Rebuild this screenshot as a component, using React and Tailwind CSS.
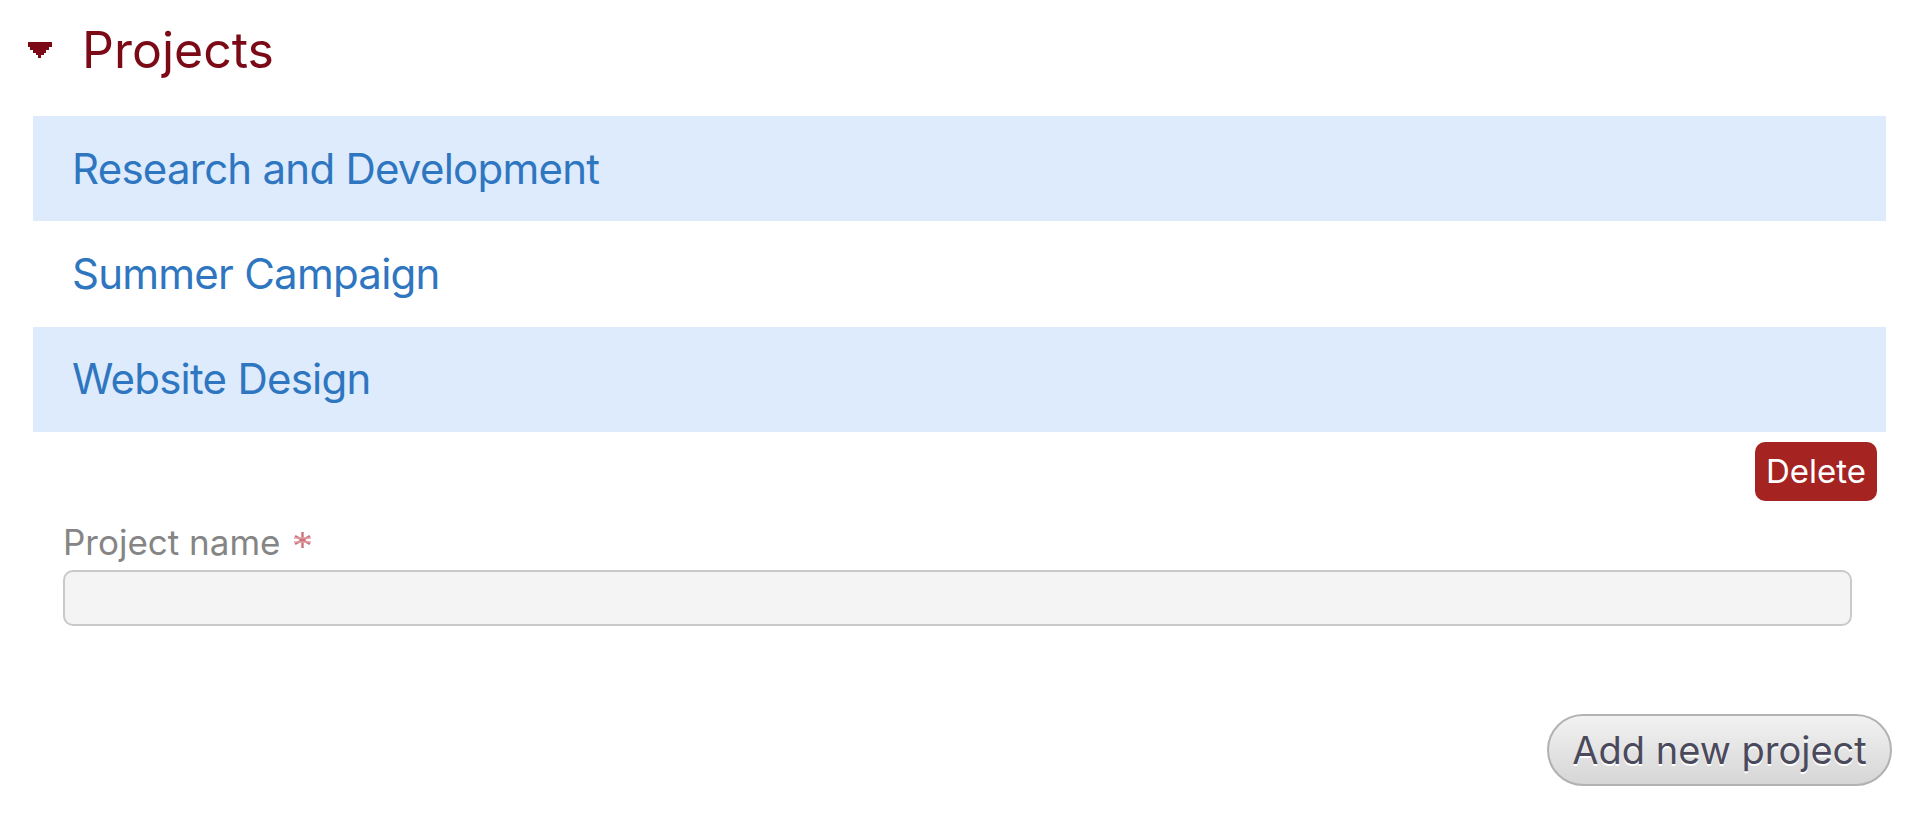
const projects = [
  { name: 'Research and Development', striped: true },
  { name: 'Summer Campaign', striped: false },
  { name: 'Website Design', striped: true },
];

const font = { fontFamily: 'Inter, "Noto Sans", sans-serif' };

const Caret = () => (
  <svg width="27" height="16" viewBox="0 0 9 6" shapeRendering="crispEdges" className="shrink-0">
    <path d="M0 0h9v2H8v1H7v1H6v1H5v1H4V5H3V4H2V3H1V2H0z" fill="#7b0a16" />
  </svg>
);

const Required = () => (
  <svg width="19" height="16" viewBox="0 0 19 16" className="ml-[12px] mb-[14px] self-end">
    <g stroke="#c0505a" strokeWidth="2.4" opacity="0.8">
      <line x1="9.5" y1="0" x2="9.5" y2="16" />
      <line x1="2" y1="4" x2="17" y2="12" />
      <line x1="2" y1="12" x2="17" y2="4" />
      <line x1="1" y1="6" x2="18" y2="6" stroke="#d88a90" strokeWidth="1.4" />
      <line x1="1" y1="10" x2="18" y2="10" stroke="#d88a90" strokeWidth="1.4" />
    </g>
  </svg>
);

export default function App() {
  return (
    <div className="w-full min-h-[817px] bg-white" style={font}>
      {/* Section header */}
      <div className="flex items-center pl-[26px] pt-[20px] mb-[36px] h-[80px]">
        <Caret />
        <h2 className="ml-[29px] text-[50px] leading-[60px] text-[#7b0a16]">Projects</h2>
      </div>

      {/* Project list */}
      <div className="ml-[33px] mr-[34px]">
        {projects.map((p) => (
          <div
            key={p.name}
            className={`flex items-center h-[105.4px] pl-[39px] ${p.striped ? 'bg-[#ddebfd]' : 'bg-white'}`}
          >
            <span className="text-[42px] leading-none tracking-[-0.018em] text-[#2f76c1]">{p.name}</span>
          </div>
        ))}

        <div className="flex justify-end mt-[10px] pr-[9px]">
          <button className="h-[59px] px-[11px] rounded-[10px] bg-[#a52422] text-white text-[33px] leading-none">
            Delete
          </button>
        </div>

        {/* Form */}
        <div className="ml-[30px] mr-[34px] mt-[21px]">
          <label className="flex items-center h-[40px] text-[35px] leading-none text-[#858585]">
            Project name
            <Required />
          </label>
          <input
            type="text"
            className="mt-[8px] block w-full h-[56px] rounded-[10px] border-2 border-[#c9c9c9] bg-[#f4f4f4] outline-none"
          />
        </div>
      </div>

      <div className="flex justify-end pr-[28px] mt-[88px]">
        <button
          className="h-[72px] w-[345px] rounded-full border-2 border-[#b2b2b2] bg-gradient-to-b from-[#f2f2f2] to-[#d6d6d6] text-[38px] leading-none text-[#4b4a5c] [text-shadow:0_2px_0_#ffffff]"
        >
          Add new project
        </button>
      </div>
    </div>
  );
}
